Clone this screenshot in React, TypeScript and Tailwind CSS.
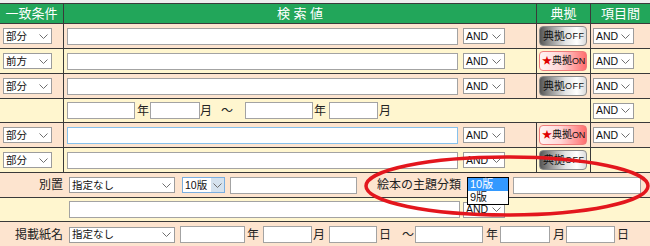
import type { ReactNode } from "react";

const LINE = "border-[#3a3a3a]";

function Chevron() {
  return (
    <svg width="9" height="5" viewBox="0 0 9 5" className="shrink-0">
      <path d="M0.5 0.5 L4.5 4.5 L8.5 0.5" fill="none" stroke="#6f6f6f" strokeWidth="1" />
    </svg>
  );
}

function Sel({ label, w, open }: { label: string; w: string; open?: boolean }) {
  if (open) {
    return (
      <div className={`flex h-[16px] shrink-0 items-center justify-between border border-[#7aaee0] bg-white pl-[2px] text-[10.5px] leading-none text-[#111] ${w}`}>
        <span>{label}</span>
        <span className="flex h-full w-[13px] items-center justify-center bg-[#d5e2ee]">
          <Chevron />
        </span>
      </div>
    );
  }
  return (
    <div className={`flex h-[16px] shrink-0 items-center justify-between border border-[#9c9c9c] bg-white pl-[2px] pr-[3px] text-[10.5px] leading-none text-[#111] ${w}`}>
      <span>{label}</span>
      <Chevron />
    </div>
  );
}

function Field({ w, focused }: { w: string; focused?: boolean }) {
  return (
    <input
      type="text"
      readOnly
      className={`h-[17px] shrink-0 border bg-white outline-none ${w} ${focused ? "border-[#86c1ec]" : "border-[#a3a3a3]"}`}
    />
  );
}

function Unit({ children, className }: { children: ReactNode; className: string }) {
  return <span className={`shrink-0 text-[12px] leading-none text-[#222] ${className}`}>{children}</span>;
}

function TenkyoButton({ on }: { on: boolean }) {
  if (on) {
    return (
      <div className="flex h-[20px] w-[48px] items-center whitespace-nowrap rounded-[4px] border border-[#f07c7c] bg-[linear-gradient(to_right,#fff4f4_0%,#ffd6d6_45%,#ff6e6e_100%)] pl-[2px] text-[10px] leading-none text-[#111]">
        <span className="text-[#e00000]">★</span>
        <span>典拠</span>
        <span className="text-[9px] tracking-[-0.3px]">ON</span>
      </div>
    );
  }
  return (
    <div className="flex h-[20px] w-[48px] items-center whitespace-nowrap rounded-[4px] border border-[#8c8c8c] bg-[linear-gradient(to_right,#555555_0%,#9a9a9a_25%,#e4e4e4_55%,#ffffff_80%,#dcdcdc_100%)] pl-[3px] text-[11px] leading-none text-[#111]">
      <span>典拠</span>
      <span className="text-[9px] tracking-[0.5px]">OFF</span>
    </div>
  );
}

function SearchRow({
  tone,
  h,
  match,
  on,
  focused,
  joiner = true,
}: {
  tone: string;
  h: string;
  match: string;
  on: boolean;
  focused?: boolean;
  joiner?: boolean;
}) {
  return (
    <div className={`flex border-b ${LINE} ${tone} ${h}`}>
      <div className={`flex w-[64px] shrink-0 items-center border-r pl-[3px] ${LINE}`}>
        <Sel label={match} w="w-[49px]" />
      </div>
      <div className={`flex w-[473px] shrink-0 items-center gap-[5px] border-r pl-[3px] ${LINE}`}>
        <Field w="w-[391px]" focused={focused} />
        <Sel label="AND" w="w-[42px]" />
      </div>
      <div className={`flex w-[54px] shrink-0 items-center border-r pl-[2px] ${LINE}`}>
        <TenkyoButton on={on} />
      </div>
      <div className="flex flex-1 items-center pl-[2px]">{joiner && <Sel label="AND" w="w-[41px]" />}</div>
    </div>
  );
}

export default function App() {
  return (
    <div className="relative h-[246px] w-[650px] overflow-hidden bg-[#ededed] font-['Liberation_Sans','Noto_Sans_CJK_JP',sans-serif]">
      <div className="h-[3px]" />
      <div className={`border-t ${LINE}`}>
        <div className={`flex h-[20px] border-b bg-[#22a65a] text-[13px] leading-none text-white ${LINE}`}>
          <div className={`flex w-[64px] shrink-0 items-center justify-center border-r ${LINE}`}>一致条件</div>
          <div className={`flex w-[473px] shrink-0 items-center justify-center border-r ${LINE}`}>検 索 値</div>
          <div className={`flex w-[54px] shrink-0 items-center justify-center border-r ${LINE}`}>典拠</div>
          <div className="flex flex-1 items-center justify-center">項目間</div>
        </div>

        <SearchRow tone="bg-[#fde4cf]" h="h-[25px]" match="部分" on={false} />
        <SearchRow tone="bg-[#fff6cf]" h="h-[25px]" match="前方" on />
        <SearchRow tone="bg-[#fde4cf]" h="h-[25px]" match="部分" on={false} />

        <div className={`flex h-[24px] border-b bg-[#fff6cf] ${LINE}`}>
          <div className={`w-[64px] shrink-0 border-r ${LINE}`} />
          <div className={`flex w-[527px] shrink-0 items-center border-r pl-[3px] ${LINE}`}>
            <Field w="w-[68px]" />
            <Unit className="w-[15px] pl-[2px]">年</Unit>
            <Field w="w-[50px]" />
            <Unit className="w-[13px]">月</Unit>
            <Unit className="w-[32px] pl-[8px]">～</Unit>
            <Field w="w-[68px]" />
            <Unit className="w-[16px] pl-[1px]">年</Unit>
            <Field w="w-[49px]" />
            <Unit className="w-[13px] pl-[1px]">月</Unit>
          </div>
          <div className="flex flex-1 items-center pl-[2px]">
            <Sel label="AND" w="w-[41px]" />
          </div>
        </div>

        <SearchRow tone="bg-[#fde4cf]" h="h-[25px]" match="部分" on focused />
        <SearchRow tone="bg-[#fff6cf]" h="h-[25px]" match="部分" on={false} joiner={false} />

        <div className={`flex h-[25px] items-center border-b bg-[#fde4cf] ${LINE}`}>
          <div className="w-[64px] shrink-0 pr-[1px] text-right text-[12px] leading-none text-[#222]">別置</div>
          <div className="ml-[5px] flex items-center">
            <Sel label="指定なし" w="w-[106px]" />
            <div className="ml-[7px]">
              <Sel label="10版" w="w-[43px]" open />
            </div>
            <div className="ml-[5px] flex">
              <Field w="w-[127px]" />
            </div>
            <span className="ml-[20px] shrink-0 text-[12px] leading-none text-[#222]">絵本の主題分類</span>
            <div className="ml-[52px] flex">
              <Field w="w-[128px]" />
            </div>
          </div>
        </div>

        <div className={`flex h-[24px] items-center border-b bg-[#fff6cf] ${LINE}`}>
          <div className="w-[64px] shrink-0" />
          <div className="ml-[5px] flex items-center gap-[3px]">
            <Field w="w-[391px]" />
            <Sel label="AND" w="w-[42px]" />
          </div>
        </div>

        <div className="flex h-[25px] items-center bg-[#fde4cf]">
          <div className="w-[64px] shrink-0 pr-[1px] text-right text-[12px] leading-none text-[#222]">掲載紙名</div>
          <div className="ml-[5px] flex items-center">
            <Sel label="指定なし" w="w-[106px]" />
            <div className="ml-[5px] flex">
              <Field w="w-[65px]" />
            </div>
            <Unit className="w-[18px] pl-[2px]">年</Unit>
            <Field w="w-[49px]" />
            <Unit className="w-[17px] pl-[1px]">月</Unit>
            <Field w="w-[48px]" />
            <Unit className="w-[13px] pl-[2px]">日</Unit>
            <Unit className="w-[25px] pl-[12px]">～</Unit>
            <Field w="w-[68px]" />
            <Unit className="w-[17px] pl-[3px]">年</Unit>
            <Field w="w-[50px]" />
            <Unit className="w-[16px] pl-[3px]">月</Unit>
            <Field w="w-[49px]" />
            <Unit className="w-[14px] pl-[2px]">日</Unit>
          </div>
        </div>
      </div>

      {/* open dropdown list for 絵本の主題分類 */}
      <div className="absolute left-[467px] top-[177px] w-[42px] border border-black bg-white text-[11px] leading-[13px]">
        <div className="bg-[#3399ff] pl-[2px] text-white">10版</div>
        <div className="pl-[2px] text-[#111]">9版</div>
      </div>

      {/* red annotation ring */}
      <svg className="pointer-events-none absolute inset-0" width="650" height="246" viewBox="0 0 650 246">
        <ellipse cx="507" cy="186" rx="141" ry="29" fill="none" stroke="#e3161d" strokeWidth="3.5" />
      </svg>
    </div>
  );
}
